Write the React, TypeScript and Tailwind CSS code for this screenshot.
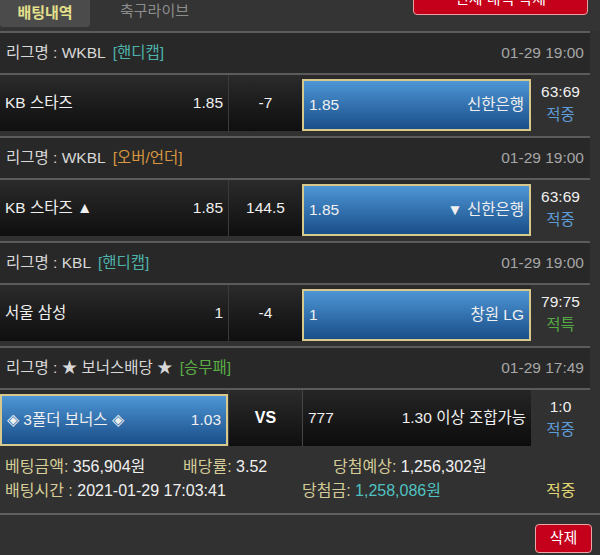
import React from 'react';

interface Side {
  a: string;
  b: string;
}

interface Bet {
  league: string;
  tag: string;
  tagColor: string;
  time: string;
  left: Side;
  mid: string;
  right: Side;
  pick: 'left' | 'right';
  score: string;
  result: string;
  resultColor: string;
}

const bets: Bet[] = [
  {
    league: 'WKBL',
    tag: '[핸디캡]',
    tagColor: 'text-[#4db3ab]',
    time: '01-29 19:00',
    left: { a: 'KB 스타즈', b: '1.85' },
    mid: '-7',
    right: { a: '1.85', b: '신한은행' },
    pick: 'right',
    score: '63:69',
    result: '적중',
    resultColor: 'text-[#5d9bd6]'
  },
  {
    league: 'WKBL',
    tag: '[오버/언더]',
    tagColor: 'text-[#d7963f]',
    time: '01-29 19:00',
    left: { a: 'KB 스타즈 ▲', b: '1.85' },
    mid: '144.5',
    right: { a: '1.85', b: '▼ 신한은행' },
    pick: 'right',
    score: '63:69',
    result: '적중',
    resultColor: 'text-[#5d9bd6]'
  },
  {
    league: 'KBL',
    tag: '[핸디캡]',
    tagColor: 'text-[#4db3ab]',
    time: '01-29 19:00',
    left: { a: '서울 삼성', b: '1' },
    mid: '-4',
    right: { a: '1', b: '창원 LG' },
    pick: 'right',
    score: '79:75',
    result: '적특',
    resultColor: 'text-[#55a845]'
  },
  {
    league: '★ 보너스배당 ★',
    tag: '[승무패]',
    tagColor: 'text-[#5aae45]',
    time: '01-29 17:49',
    left: { a: '◈ 3폴더 보너스 ◈', b: '1.03' },
    mid: 'VS',
    right: { a: '777', b: '1.30 이상 조합가능' },
    pick: 'left',
    score: '1:0',
    result: '적중',
    resultColor: 'text-[#5d9bd6]'
  }
];

function Cell({ side, picked, framed, width }: { side: Side; picked: boolean; framed?: boolean; width: string }) {
  const look = picked
    ? 'mt-[4px] h-[52px] bg-linear-to-b from-[#4e96d6] to-[#1a4f89] border-2 border-[#d6c98b]'
    : framed
      ? 'h-full bg-linear-to-b from-[#262626] to-[#0c0c0c] border-l border-[#454545]'
      : 'h-full';
  return (
    <div className={`${width} ${look} flex items-center justify-between px-[5px] text-[#f0f0f0]`}>
      <span>{side.a}</span>
      <span>{side.b}</span>
    </div>
  );
}

function BetGroup({ bet }: { bet: Bet }) {
  const isVs = bet.mid === 'VS';
  return (
    <div className="pb-[5px]">
      {/* league header */}
      <div className="w-[590px] h-[44px] bg-[#282828] border-t-2 border-b-2 border-[#5b5b5b] flex items-center justify-between px-[6px]">
        <div className="text-[#d8d8d8]">
          리그명 : {bet.league}
          <span className={`ml-[7px] ${bet.tagColor}`}>{bet.tag}</span>
        </div>
        <span className="text-[#a6a6a6]">{bet.time}</span>
      </div>

      {/* bet row */}
      <div className="flex h-[56px]">
        <div className="w-[531px] flex bg-linear-to-b from-[#2b2b2b] to-[#0f0f0f]">
          <Cell side={bet.left} picked={bet.pick === 'left'} width="w-[228px]" />
          <div className="w-px h-full bg-[#3b3b3b]" />
          <div
            className={`w-[73px] h-full flex items-center justify-center ${isVs ? 'font-bold text-white text-[16px]' : 'text-[#f0f0f0]'}`}
          >
            {bet.mid}
          </div>
          <Cell side={bet.right} picked={bet.pick === 'right'} framed={isVs} width="w-[229px]" />
        </div>
        <div className="w-[59px] flex flex-col items-center justify-center leading-[23px]">
          <span className="text-[#f0f0f0]">{bet.score}</span>
          <span className={bet.resultColor}>{bet.result}</span>
        </div>
      </div>
    </div>
  );
}

export default function App() {
  return (
    <div className="w-[600px] h-[555px] overflow-hidden bg-[#313131] font-['Liberation_Sans','Noto_Sans_CJK_KR',sans-serif] text-[15.5px]">
      {/* tabs */}
      <div className="h-[31px] flex items-start bg-[#343434]">
        <div className="w-[90px] h-[27px] bg-[#4b4b4b] rounded-b-[3px] flex items-center justify-center text-[#e4e08c] font-bold text-[15px]">
          배팅내역
        </div>
        <div className="ml-[30px] h-[22px] flex items-center text-[#8c8c8c] text-[15px]">축구라이브</div>
        <button className="ml-auto mr-[12px] -mt-[17px] w-[175px] h-[32px] rounded-[4px] bg-[#c4001b] border border-[#e8a0a0] text-white text-[15px]">
          전체 내역 삭제
        </button>
      </div>

      {bets.map((bet, i) => (
        <BetGroup key={i} bet={bet} />
      ))}

      {/* summary */}
      <div className="pt-[4px] leading-[24px] text-[16px] text-[#f0f0f0]">
        <div className="flex">
          <span className="w-[183px] pl-[5px]">
            <span className="text-[#d6cc98]">베팅금액:</span> 356,904원
          </span>
          <span className="w-[150px]">
            <span className="text-[#d6cc98]">배당률:</span> 3.52
          </span>
          <span>
            <span className="text-[#d6cc98]">당첨예상:</span> 1,256,302원
          </span>
        </div>
        <div className="flex">
          <span className="w-[302px] pl-[5px]">
            <span className="text-[#d6cc98]">배팅시간 :</span> 2021-01-29 17:03:41
          </span>
          <span className="w-[244px]">
            <span className="text-[#d6cc98]">당첨금:</span>{' '}
            <span className="text-[#4fc1c0]">1,258,086원</span>
          </span>
          <span className="text-[#e0d673]">적중</span>
        </div>
      </div>

      <div className="mt-[10px] h-[2px] bg-[#5f5f5f]" />

      <div className="flex justify-end pr-[8px] pt-[9px]">
        <button className="w-[57px] h-[29px] rounded-[4px] bg-[#c4001b] border border-[#e8a8a8] text-white text-[15px]">
          삭제
        </button>
      </div>
    </div>
  );
}
